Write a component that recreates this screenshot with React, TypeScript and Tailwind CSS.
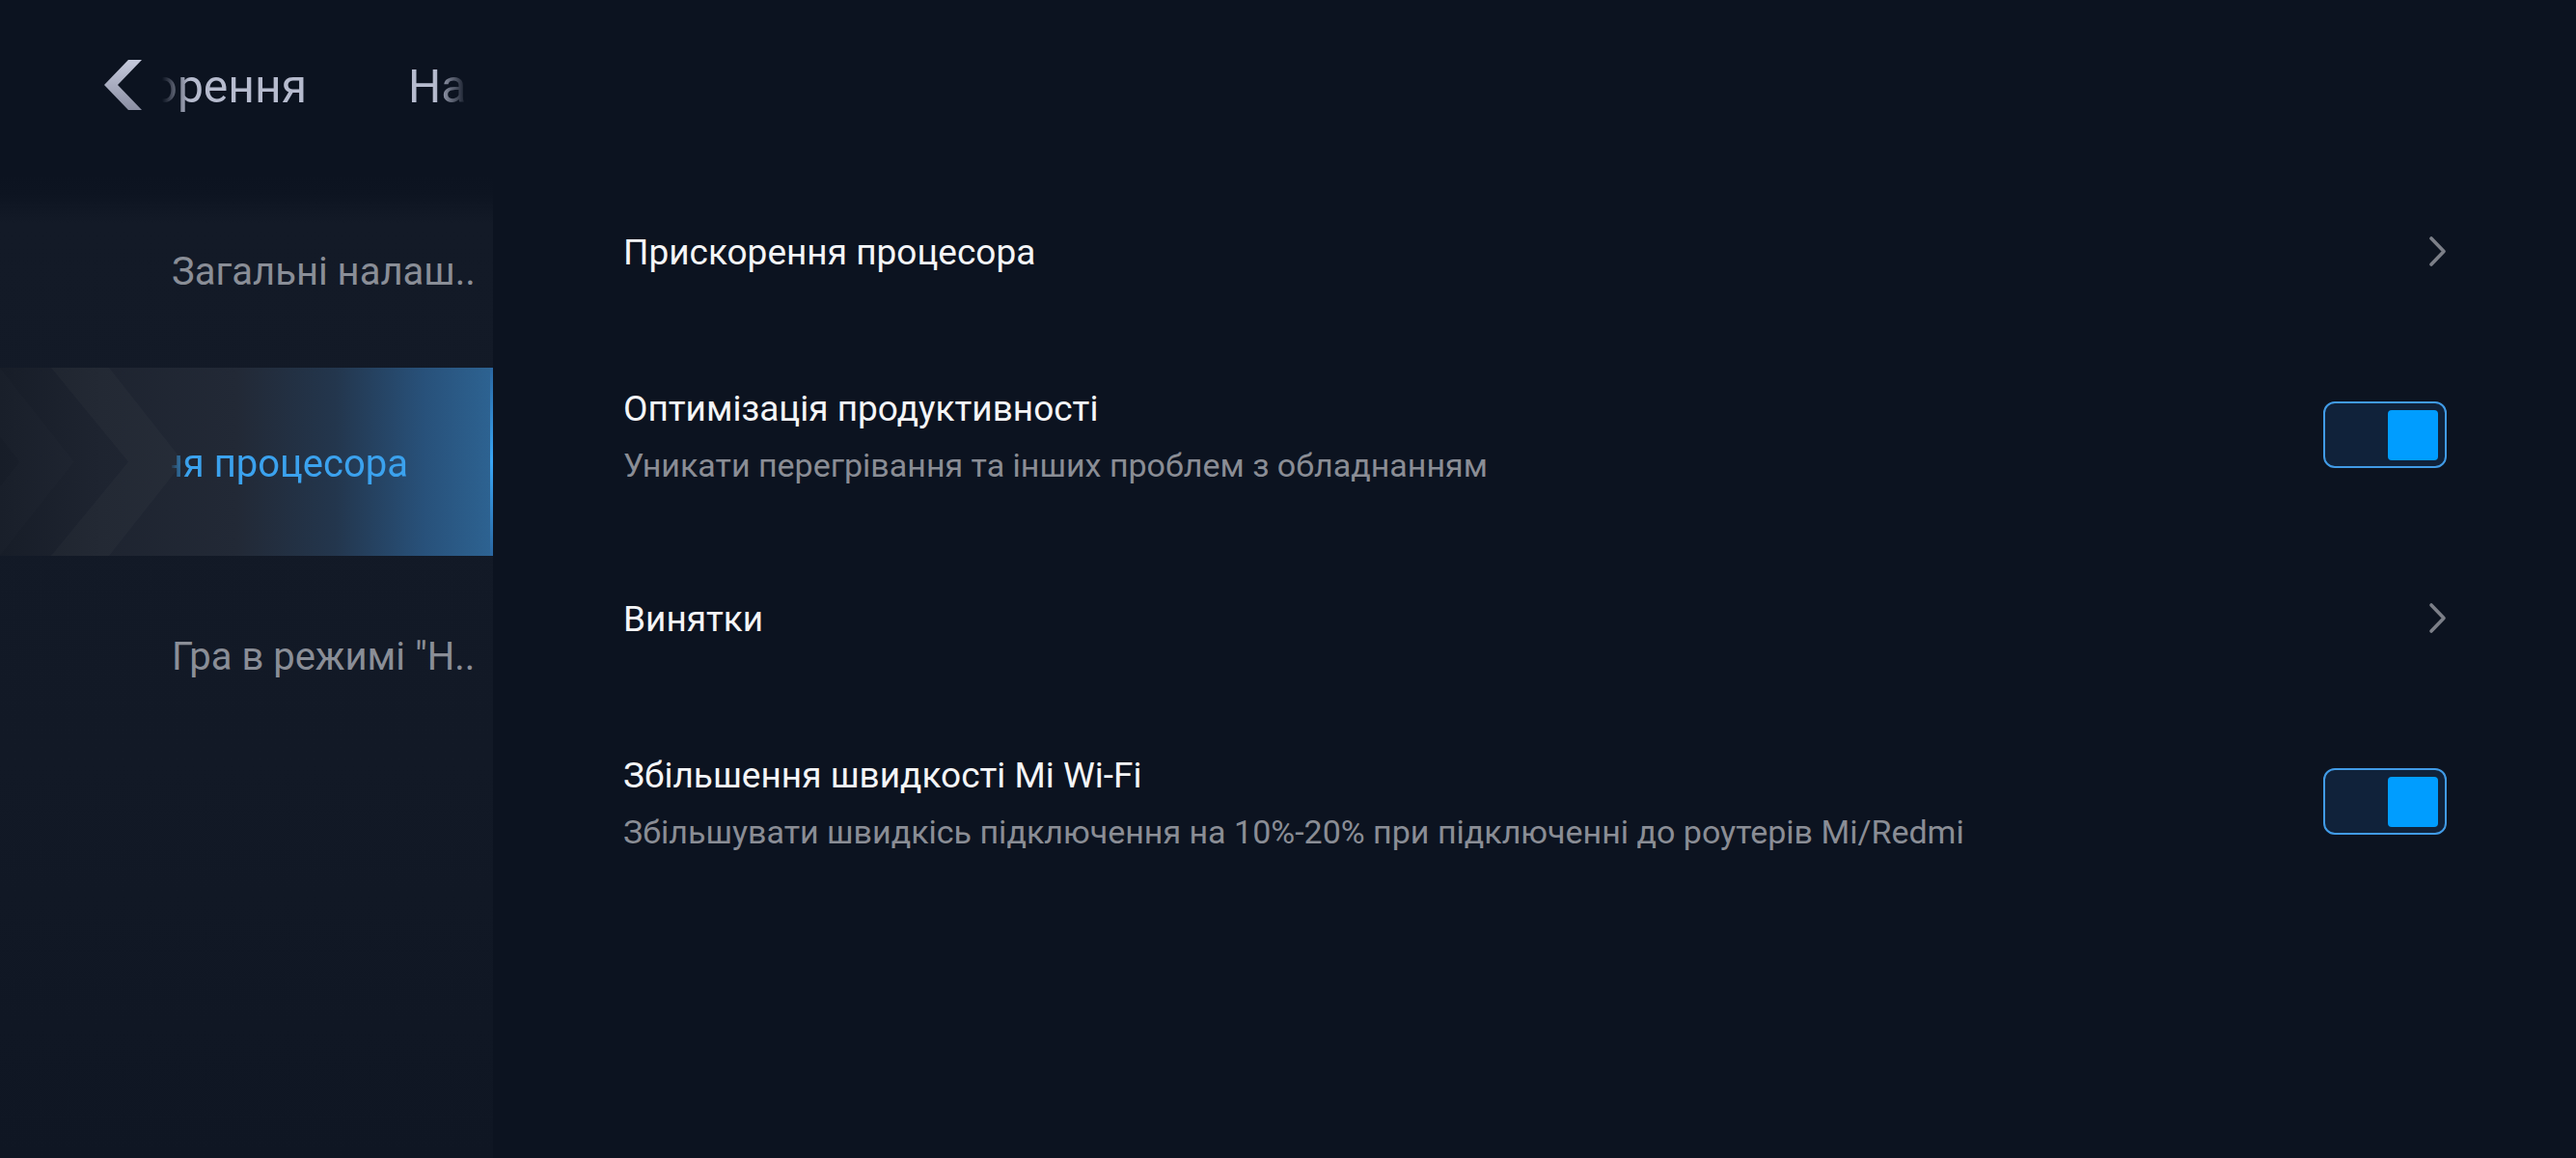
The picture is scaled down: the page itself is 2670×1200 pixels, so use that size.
import React from "react";

const rows = [
  { title: "Прискорення процесора", kind: "link" },
  {
    title: "Оптимізація продуктивності",
    desc: "Уникати перегрівання та інших проблем з обладнанням",
    kind: "toggle",
  },
  { title: "Винятки", kind: "link" },
  {
    title: "Збільшення швидкості Mi Wi-Fi",
    desc: "Збільшувати швидкісь підключення на 10%-20% при підключенні до роутерів Mi/Redmi",
    kind: "toggle",
  },
];

function BackChevron() {
  return (
    <svg width="40" height="52" viewBox="0 0 40 52" className="shrink-0">
      <defs>
        <linearGradient id="back-g" x1="0" y1="0" x2="0" y2="1">
          <stop offset="0" stopColor="#c6cadc" />
          <stop offset="1" stopColor="#8b8fa3" />
        </linearGradient>
      </defs>
      <polygon points="25,0 39,0 14,26 39,52 25,52 0,26" fill="url(#back-g)" />
    </svg>
  );
}

function Arrow() {
  return (
    <svg width="19" height="33" viewBox="0 0 19 33" className="shrink-0">
      <polyline
        points="3,3 16,16.5 3,30"
        fill="none"
        stroke="#7c7f88"
        strokeWidth="3.6"
        strokeLinecap="round"
        strokeLinejoin="round"
      />
    </svg>
  );
}

function Toggle() {
  return (
    <div className="w-[128px] h-[69px] shrink-0 rounded-[12px] border-2 border-[#419be6] bg-[#10223a] flex items-start justify-end pt-[7px] pr-[7px]">
      <div className="w-[52px] h-[52px] rounded-[4px] bg-[#009dff]" />
    </div>
  );
}

export default function App() {
  return (
    <div className="w-[2670px] h-[1200px] flex bg-[#0c1320] overflow-hidden font-[Roboto,sans-serif]">
      {/* left column: header tabs + category list */}
      <div className="w-[511px] shrink-0 flex flex-col">
        <div className="h-[183px] shrink-0 flex items-start pt-[62px] pl-[108px]">
          <BackChevron />
          <div className="ml-[14px] w-[156px] h-[56px] overflow-hidden flex justify-end [mask-image:linear-gradient(to_right,transparent_0px,transparent_6px,black_34px)]">
            <span className="shrink-0 whitespace-nowrap text-[48px] leading-[56px] text-[#b6bbce]">Прискорення</span>
          </div>
          <div className="ml-[105px] w-[64px] h-[56px] overflow-hidden [mask-image:linear-gradient(to_right,black_28px,transparent_62px)]">
            <span className="whitespace-nowrap text-[48px] leading-[56px] text-[#b6bbce]">Налаштування</span>
          </div>
        </div>

        <div className="flex-1 flex flex-col bg-[linear-gradient(180deg,#0c1320_0px,#0d1421_18px,#131a27_48px,#121926_60%,#0f1623_100%)]">
          <div className="h-[198px] flex items-center pl-[178px]">
            <span className="whitespace-nowrap text-[40px] text-[#8a8e97]">Загальні налаш..</span>
          </div>

          <div className="relative h-[195px] flex items-center pl-[178px] pt-[5px] bg-[linear-gradient(90deg,#171d28_0%,#1e2430_20%,#222936_48%,#23364d_68%,#28517a_86%,#2d6392_100%)]">
            <svg className="absolute left-0 top-0" width="200" height="195" viewBox="0 0 200 195">
              <polygon points="-57,0 0,0 77,97.5 0,195 -57,195 20,97.5" fill="#ffffff" fillOpacity="0.012" />
              <polygon points="53,0 113,0 190,97.5 113,195 53,195 133,97.5" fill="#ffffff" fillOpacity="0.025" />
            </svg>
            <div className="relative w-[245px] overflow-hidden flex justify-end [mask-image:linear-gradient(to_right,rgba(0,0,0,0.12)_0px,black_16px)]">
              <span className="shrink-0 whitespace-nowrap text-[40px] text-[#3ba2ee]">Прискорення процесора</span>
            </div>
            <div className="absolute right-0 top-0 h-full w-[3px] bg-[linear-gradient(180deg,#2a66a0,#3aa6f6_50%,#2a66a0)]" />
          </div>

          <div className="h-[210px] flex items-center pl-[178px]">
            <span className="whitespace-nowrap text-[40px] text-[#8a8e97]">Гра в режимі "Н..</span>
          </div>
        </div>
      </div>

      {/* settings list */}
      <div className="flex-1 flex flex-col pt-[165px] pl-[135px] pr-[134px]">
        {rows.map((r) => (
          <div key={r.title} className="h-[190px] flex items-center justify-between">
            <div className="flex flex-col pt-[3px]">
              <div className="text-[37px] leading-[44px] text-[#f4f5f7] whitespace-nowrap">{r.title}</div>
              {r.desc && (
                <div className="mt-[16px] text-[34px] leading-[40px] text-[#8a8d95] whitespace-nowrap">{r.desc}</div>
              )}
            </div>
            {r.kind === "link" ? <Arrow /> : <Toggle />}
          </div>
        ))}
      </div>
    </div>
  );
}
